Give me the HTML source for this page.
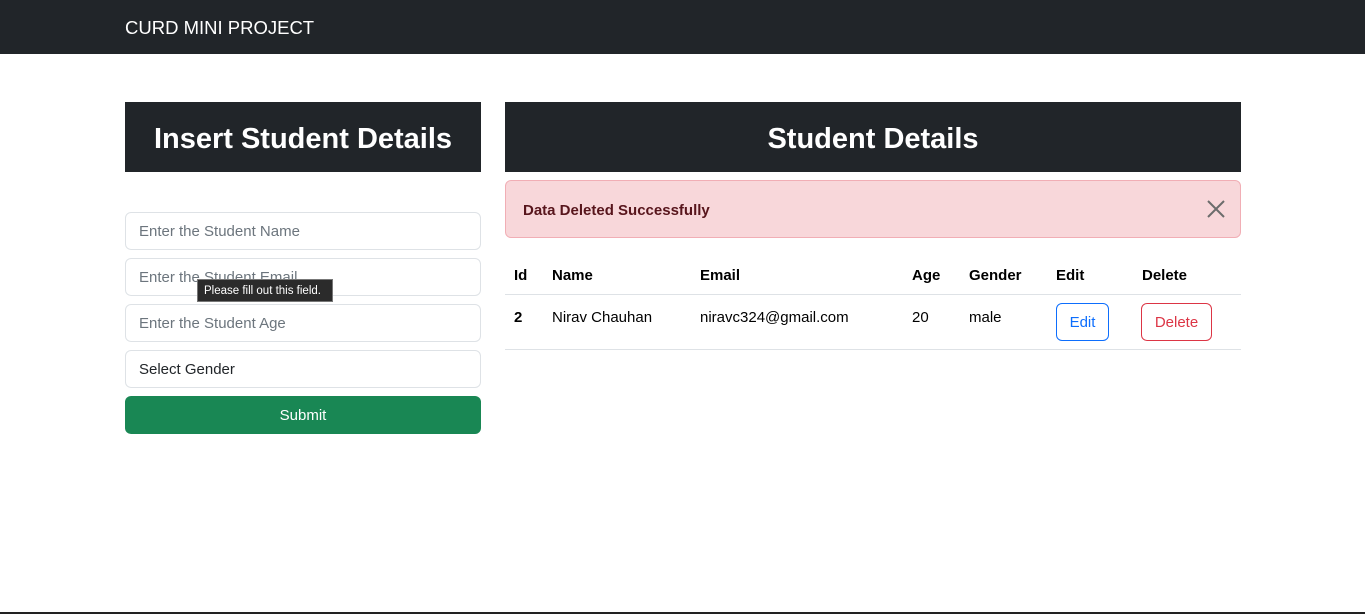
<!DOCTYPE html>
<html><head><style>
*{box-sizing:border-box;margin:0;padding:0}
body{width:1365px;height:614px;background:#fff;font-family:"Liberation Sans",sans-serif;position:relative;overflow:hidden;color:#212529}
.a{position:absolute}
.nav{left:0;top:0;width:1365px;height:54px;background:#212529}
.h{background:#212529;color:#fff;font-weight:bold;font-size:29px;display:flex;align-items:center;justify-content:center;height:70px;top:102px;padding-top:4px}
.in{left:125px;width:356px;height:38px;border:1px solid #dee2e6;border-radius:6px;font-size:15px;color:#6c757d;padding-left:13px;line-height:38px}
.th{top:267px;font-weight:bold;font-size:15px;color:#000}
.td{top:309px;font-size:15px;color:#000}
.btn{top:303px;height:38px;border-radius:6px;font-size:15px;line-height:38px;text-align:center}
</style></head><body>
<div class="a nav"></div>
<div class="a" style="left:125px;top:17px;color:#fff;font-size:18.5px">CURD MINI PROJECT</div>
<div class="a h" style="left:125px;width:356px">Insert Student Details</div>
<div class="a h" style="left:505px;width:736px">Student Details</div>
<div class="a" style="left:505px;top:180px;width:736px;height:58px;background:#f8d7da;border:1px solid #f1aeb5;border-radius:6px"></div>
<div class="a" style="left:523px;top:202px;font-size:15px;font-weight:bold;color:#58151c">Data Deleted Successfully</div>
<svg class="a" style="left:1207px;top:200px" width="18" height="18" viewBox="0 0 18 18"><path d="M1 1L17 17M17 1L1 17" stroke="#6c6c6c" stroke-width="2"/></svg>
<div class="a in" style="top:212px">Enter the Student Name</div>
<div class="a in" style="top:258px">Enter the Student Email</div>
<div class="a in" style="top:304px">Enter the Student Age</div>
<div class="a in" style="top:350px;color:#212529">Select Gender</div>
<div class="a" style="left:125px;top:396px;width:356px;height:38px;background:#198754;border-radius:6px;color:#fff;font-size:15px;text-align:center;line-height:40px">Submit</div>
<div class="a" style="left:197px;top:279px;width:136px;height:23px;background:#2b2b2b;border:1px solid #777;color:#fff;font-size:11.5px;line-height:23px;padding-left:6px">Please fill out this field.</div>
<div class="a th" style="left:514px">Id</div>
<div class="a th" style="left:552px">Name</div>
<div class="a th" style="left:700px">Email</div>
<div class="a th" style="left:912px">Age</div>
<div class="a th" style="left:969px">Gender</div>
<div class="a th" style="left:1056px">Edit</div>
<div class="a th" style="left:1142px">Delete</div>
<div class="a" style="left:505px;top:294px;width:736px;height:1px;background:#dee2e6"></div>
<div class="a td" style="left:514px;font-weight:bold">2</div>
<div class="a td" style="left:552px">Nirav Chauhan</div>
<div class="a td" style="left:700px">niravc324@gmail.com</div>
<div class="a td" style="left:912px">20</div>
<div class="a td" style="left:969px">male</div>
<div class="a btn" style="left:1056px;width:53px;border:1px solid #0d6efd;color:#0d6efd">Edit</div>
<div class="a btn" style="left:1141px;width:71px;border:1px solid #dc3545;color:#dc3545">Delete</div>
<div class="a" style="left:505px;top:349px;width:736px;height:1px;background:#dee2e6"></div>
<div class="a" style="left:0;top:612px;width:1365px;height:2px;background:#222"></div>
</body></html>
